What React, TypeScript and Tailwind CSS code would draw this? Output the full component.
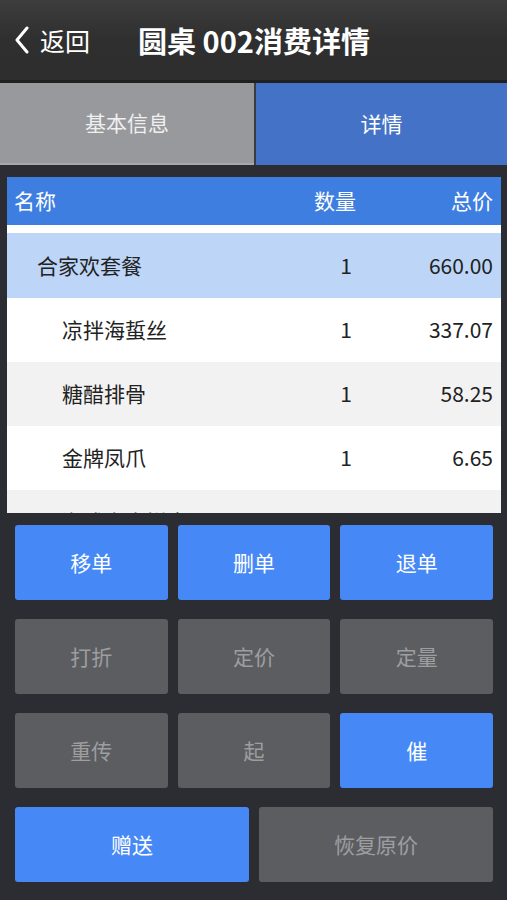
import React from "react";

const font = { fontFamily: '"Noto Sans CJK SC", "Noto Sans", sans-serif' };

type Row = { name: string; qty: string; price: string; kind: "group" | "white" | "gray" };

const rows: Row[] = [
  { name: "合家欢套餐", qty: "1", price: "660.00", kind: "group" },
  { name: "凉拌海蜇丝", qty: "1", price: "337.07", kind: "white" },
  { name: "糖醋排骨", qty: "1", price: "58.25", kind: "gray" },
  { name: "金牌凤爪", qty: "1", price: "6.65", kind: "white" },
  { name: "潮式卤水拼盘", qty: "1", price: "31.55", kind: "gray" },
];

function Btn({ label, blue }: { label: string; blue?: boolean }) {
  return (
    <div
      className={
        "h-[75px] rounded-[3px] flex items-center justify-center text-[21px] " +
        (blue ? "bg-[#4689f6] text-white" : "bg-[#5c5d60] text-[#9d9ea0]")
      }
    >
      {label}
    </div>
  );
}

export default function App() {
  return (
    <div className="w-[507px] h-[900px] bg-[#2b2d33] flex flex-col overflow-hidden" style={font}>
      {/* header */}
      <div className="h-[83px] shrink-0 bg-gradient-to-b from-[#3d3d3d] via-[#2f2f2f] to-[#2e2e2e] flex items-center border-b-[3px] border-[#202020]">
        <div className="flex items-center pl-[13px] w-[138px]">
          <svg width="18" height="28" viewBox="0 0 18 28" className="mr-[9px]">
            <path d="M14 2 L4 14 L14 26" stroke="white" strokeWidth="3" fill="none" strokeLinecap="round" strokeLinejoin="round" />
          </svg>
          <span className="text-white text-[25px] leading-none">返回</span>
        </div>
        <span className="text-white text-[29px] font-bold leading-none">圆桌 002消费详情</span>
      </div>
      {/* tabs */}
      <div className="h-[82px] shrink-0 flex">
        <div className="w-[254px] bg-[#98999c] border-b-2 border-[#a7a8ab] flex items-center justify-center text-[21px] text-[#f0f0f0]">
          基本信息
        </div>
        <div className="w-[2px] bg-[#3a3c42]"></div>
        <div className="flex-1 bg-[#4472c6] flex items-center justify-center text-[21px] text-white">详情</div>
      </div>
      {/* table */}
      <div className="mt-[12px] ml-[7px] mr-[6px] h-[336px] shrink-0 bg-white overflow-hidden flex flex-col">
        <div className="h-[48px] shrink-0 bg-[#3e7ee0] flex items-center text-white text-[21px] pl-[7px] pr-[8px]">
          <div className="flex-1">名称</div>
          <div className="w-[80px] text-right">数量</div>
          <div className="w-[137px] text-right">总价</div>
        </div>
        <div className="h-[8px] shrink-0 bg-white"></div>
        {rows.map((r, i) => (
          <div
            key={i}
            className={
              "shrink-0 flex items-center text-[21px] text-[#222] pr-[8px] " +
              (r.kind === "group" ? "bg-[#bdd5f7] pl-[30px] h-[65px]" : r.kind === "gray" ? "bg-[#f2f2f2] pl-[55px] h-[64px]" : "bg-white pl-[55px] h-[64px]")
            }
          >
            <div className="flex-1">{r.name}</div>
            <div className="w-[80px] text-right pr-[4px]">{r.qty}</div>
            <div className="w-[137px] text-right">{r.price}</div>
          </div>
        ))}
      </div>
      {/* buttons */}
      <div className="mt-[12px] pl-[15px] pr-[14px] flex flex-col gap-[19px]">
        <div className="grid grid-cols-3 gap-x-[10px]">
          <Btn label="移单" blue />
          <Btn label="删单" blue />
          <Btn label="退单" blue />
        </div>
        <div className="grid grid-cols-3 gap-x-[10px]">
          <Btn label="打折" />
          <Btn label="定价" />
          <Btn label="定量" />
        </div>
        <div className="grid grid-cols-3 gap-x-[10px]">
          <Btn label="重传" />
          <Btn label="起" />
          <Btn label="催" blue />
        </div>
        <div className="grid grid-cols-2 gap-x-[10px]">
          <Btn label="赠送" blue />
          <Btn label="恢复原价" />
        </div>
      </div>
    </div>
  );
}
